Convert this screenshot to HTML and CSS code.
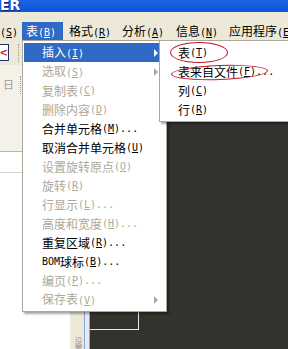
FILE: index.html
```html
<!DOCTYPE html>
<html lang="zh-CN">
<head>
<meta charset="UTF-8">
<title>表菜单</title>
<link rel="stylesheet" href="styles.css">
</head>
<body>

<div class="screen">
    <div class="titlebar"><span class="title">ER</span></div>

    <div class="menubar">
        <span class="mitem m-first"><span class="key">(<u>S</u>)</span></span>
        <span class="mitem m-table active">表<span class="key">(<u>B</u>)</span></span>
        <span class="mitem m-wide">格式<span class="key">(<u>R</u>)</span></span>
        <span class="mitem m-wide">分析<span class="key">(<u>A</u>)</span></span>
        <span class="mitem m-wide m-info">信息<span class="key">(<u>N</u>)</span></span>
        <span class="mitem">应用程序<span class="key">(<u>E</u>)</span></span>
    </div>

    <div class="workspace">
        <div class="sidebar">
            <div class="toolbar">
                <span class="closebox">&lt;</span>
                <span class="grip"></span>
            </div>
            <div class="panel">
                <span class="panel-icon">日</span>
                <span class="grip"></span>
            </div>
            <div class="list-row"></div>
        </div>

        <div class="splitter">
            <span class="split-label">设置</span>
        </div>
        <div class="split-edge"></div>

        <div class="canvas">
            <div class="frame"></div>
        </div>

        <!-- 表 dropdown -->
        <div class="menu main-menu">
            <div class="row active"><span>插入<span class="key">(<u>I</u>)</span></span><span class="arrow"></span></div>
            <div class="row off"><span>选取<span class="key">(<u>S</u>)</span></span><span class="arrow"></span></div>
            <div class="row off">复制表<span class="key">(<u>C</u>)</span></div>
            <div class="row off">删除内容<span class="key">(<u>D</u>)</span></div>
            <div class="row">合并单元格<span class="key">(<u>M</u>)...</span></div>
            <div class="row">取消合并单元格<span class="key">(<u>U</u>)</span></div>
            <div class="row off">设置旋转原点<span class="key">(<u>O</u>)</span></div>
            <div class="row off">旋转<span class="key">(<u>R</u>)</span></div>
            <div class="row off">行显示<span class="key">(<u>L</u>)...</span></div>
            <div class="row off">高度和宽度<span class="key">(<u>H</u>)...</span></div>
            <div class="row">重复区域<span class="key">(<u>R</u>)...</span></div>
            <div class="row"><span class="key">BOM</span>球标<span class="key">(<u>B</u>)...</span></div>
            <div class="row off">编页<span class="key">(<u>P</u>)...</span></div>
            <div class="row off"><span>保存表<span class="key">(<u>V</u>)</span></span><span class="arrow"></span></div>
        </div>

        <!-- 插入 submenu -->
        <div class="menu sub-menu">
            <div class="row">表<span class="key">(<u>T</u>)</span></div>
            <div class="row">表来自文件<span class="key">(<u>F</u>)...</span></div>
            <div class="row">列<span class="key">(<u>C</u>)</span></div>
            <div class="row">行<span class="key">(<u>R</u>)</span></div>
            <span class="mark mark-one"></span>
            <span class="mark mark-two"></span>
        </div>
    </div>
</div>

</body>
</html>
```

FILE: styles.css
```css
body {
    margin: 0;
    padding: 0;
    font-family: "Noto Sans CJK SC", "DejaVu Sans", sans-serif;
    font-size: 12px;
    background-color: #fff;
}

.screen {
    width: 288px;
    height: 349px;
    overflow: hidden;
}

/* title bar */

.titlebar {
    height: 12px;
    background: linear-gradient(#1c64e4, #0a54d8);
    overflow: hidden;
}

.title {
    display: block;
    margin-top: -3px;
    font-family: "DejaVu Sans", sans-serif;
    font-weight: bold;
    font-size: 14px;
    line-height: 16px;
    color: #fff;
    text-shadow: 1px 1px 0 #0a2a80;
}

/* menu bar */

.menubar {
    display: flex;
    align-items: flex-end;
    height: 28px;
    background-color: #ece9d8;
    white-space: nowrap;
    overflow: hidden;
}

.mitem {
    flex: none;
    height: 18px;
    line-height: 18px;
    padding-left: 6px;
    box-sizing: border-box;
    color: #000;
}

.m-first {
    width: 22px;
    padding-left: 0;
}

.m-table {
    width: 41px;
    padding-left: 4px;
}

.m-wide {
    width: 53px;
}

.m-info {
    width: 54px;
    padding-left: 7px;
}

.mitem.active {
    background-color: #316ac5;
    color: #fff;
}

.key {
    font-family: "DejaVu Sans Mono", monospace;
    font-size: 10px;
}

/* background window */

.workspace {
    position: relative;
    display: flex;
    height: 309px;
}

.sidebar {
    width: 70px;
    flex: none;
    background-color: #fff;
}

.toolbar {
    display: flex;
    align-items: center;
    height: 25px;
    background-color: #ece9d8;
}

.closebox {
    width: 9px;
    height: 15px;
    margin-left: -1px;
    border: 1px solid #1d2f66;
    border-left: none;
    background-color: #fff;
    color: #c4281c;
    font-family: "DejaVu Sans", sans-serif;
    font-weight: bold;
    font-size: 10px;
    line-height: 15px;
    text-align: right;
}

.grip {
    width: 1px;
    height: 18px;
    margin-left: 9px;
    border-left: 1px dotted #9c9a8c;
}

.panel {
    display: flex;
    align-items: center;
    height: 86px;
    align-content: flex-start;
    background-color: #f3f1e8;
    border-bottom: 1px solid #b8b5a6;
}

.panel .panel-icon {
    margin-left: 3px;
    margin-top: -48px;
    color: #a09e92;
    font-size: 11px;
}

.panel .grip {
    margin-left: 6px;
    margin-top: -46px;
}

.list-row {
    height: 20px;
    border-bottom: 1px solid #d6d3c6;
}

.splitter {
    display: flex;
    flex-direction: column;
    justify-content: flex-end;
    width: 14px;
    flex: none;
    background-color: #ece9d8;
}

.split-label {
    writing-mode: vertical-rl;
    margin-left: 2px;
    margin-bottom: -4px;
    font-size: 8px;
    color: #9a988c;
}

.split-edge {
    width: 4px;
    flex: none;
    background-color: #e4ebf7;
    border-left: 1px solid #8aa4d8;
    border-right: 1px solid #8aa4d8;
}

.canvas {
    flex: 1;
    background-color: #34322d;
}

.frame {
    width: 48px;
    height: 139px;
    margin-top: 150px;
    border-right: 1px solid #e8e8e8;
    border-bottom: 1px solid #e8e8e8;
}

/* drop-down menus */

.menu {
    position: absolute;
    top: 0;
    padding: 2px 1px;
    background-color: #fff;
    border: 1px solid #aca899;
    box-shadow: 2px 2px 2px rgba(0, 0, 0, 0.35);
    white-space: nowrap;
}

.main-menu {
    left: 22px;
    width: 141px;
}

.sub-menu {
    left: 159px;
    width: 150px;
}

.row {
    display: flex;
    align-items: center;
    height: 19px;
    line-height: 19px;
    padding-left: 18px;
    color: #000;
}

.sub-menu .row {
    padding-left: 17px;
}

.row.active {
    background-color: #316ac5;
    color: #fff;
}

.row.off {
    color: #aca899;
}

.row .arrow {
    margin-left: auto;
    margin-right: 7px;
    width: 0;
    height: 0;
    border-left: 4px solid currentColor;
    border-top: 4px solid transparent;
    border-bottom: 4px solid transparent;
}

/* red annotation circles */

.mark {
    position: absolute;
    border: 1px solid #c0182a;
    border-radius: 50%;
}

.mark-one {
    left: 10px;
    top: 1px;
    width: 56px;
    height: 19px;
}

.mark-two {
    left: 11px;
    top: 24px;
    width: 95px;
    height: 13px;
    transform: rotate(-2deg);
}
```
